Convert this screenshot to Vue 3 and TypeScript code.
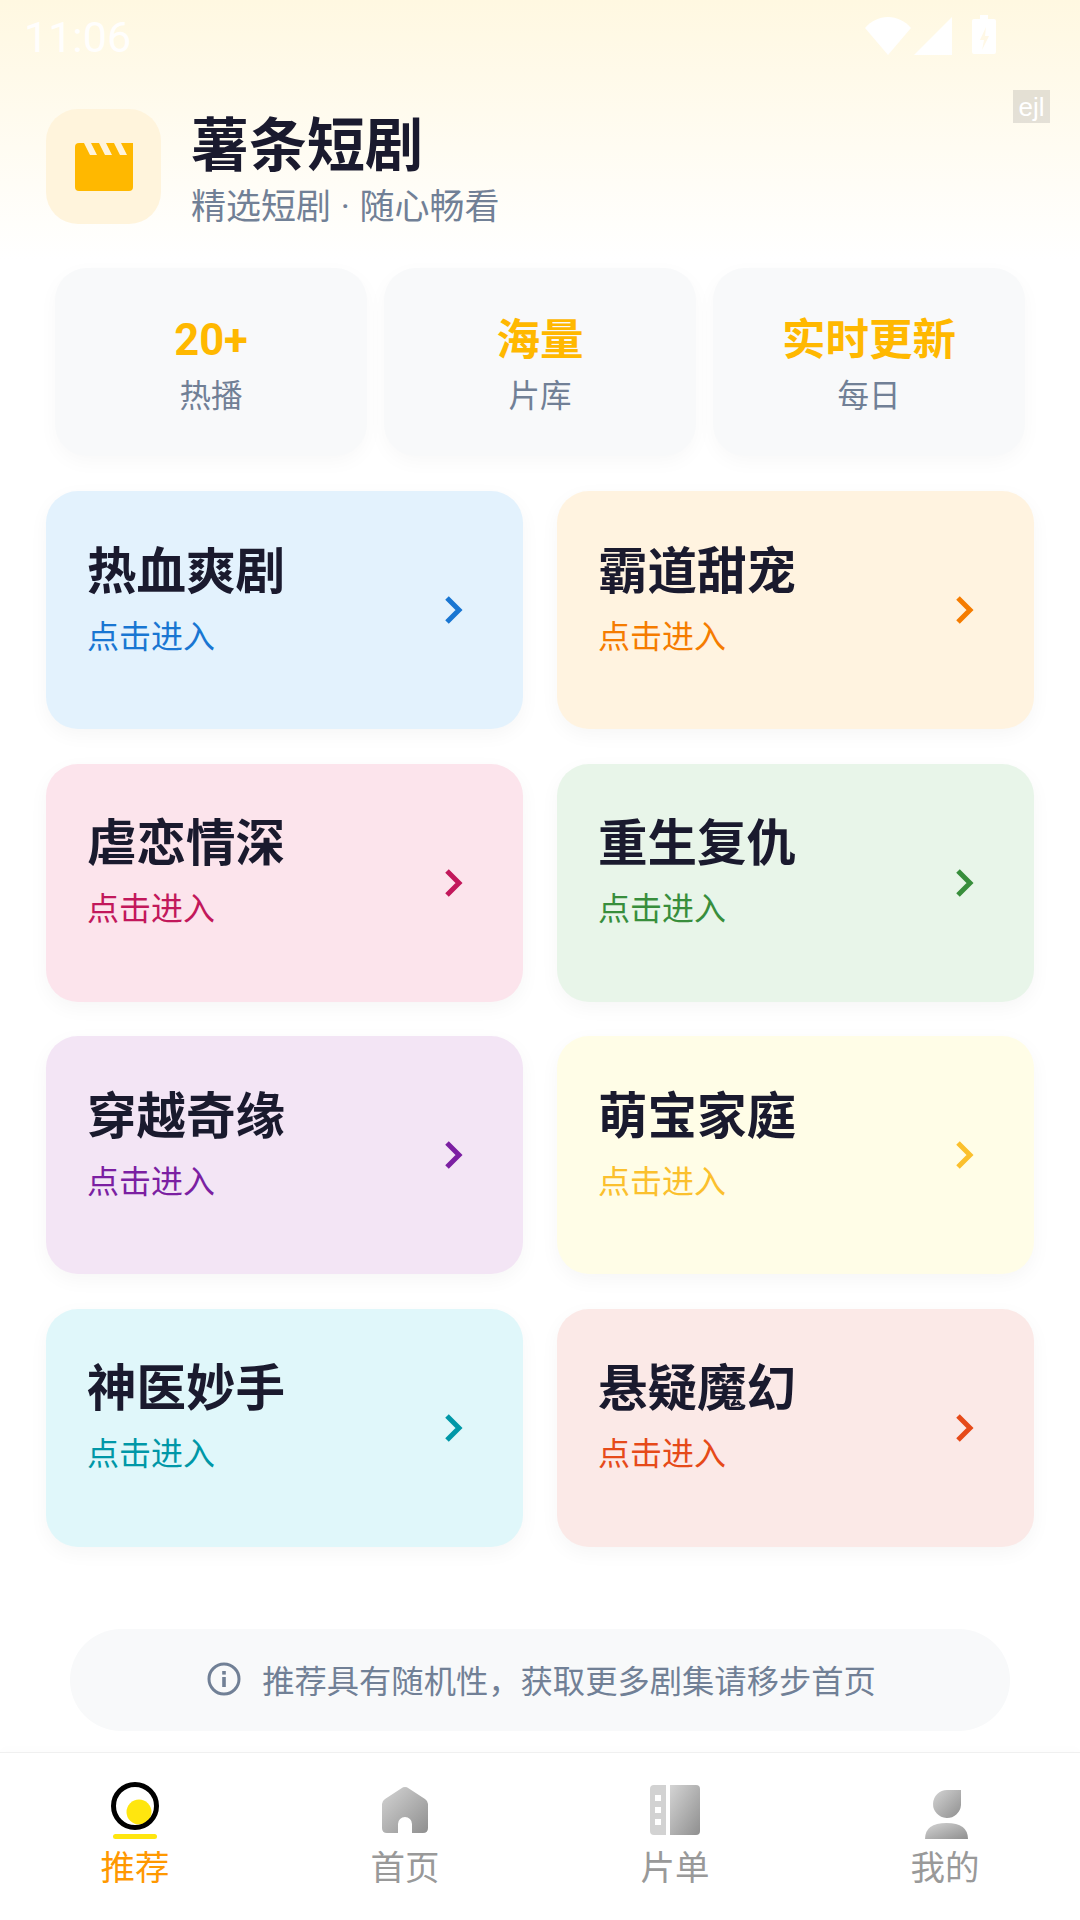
<template>
  <div class="page">
    <div class="status-bar">
      <span class="time">11:06</span>
      <div class="status-icons">
        <svg width="46" height="38" viewBox="0 0 46 38"><path d="M0 11C6 4 14 0 23 0s17 4 23 11L23 38z" fill="#fff" /></svg>
        <svg width="38" height="38" viewBox="0 0 38 38"><path d="M38 0v38H0z" fill="#fff" /></svg>
        <svg class="battery" width="24" height="39" viewBox="0 0 24 39">
          <path d="M8 0h8v4h6a2 2 0 0 1 2 2v31a2 2 0 0 1-2 2H2a2 2 0 0 1-2-2V6a2 2 0 0 1 2-2h6z" fill="#fff" />
          <path d="M14 12l-6 13h4l-2 10 7-14h-4z" fill="#fff8e6" />
        </svg>
      </div>
    </div>
    <span class="tag-ejl">ejl</span>

    <header class="header">
      <div class="logo">
        <svg width="58" height="48" viewBox="0 0 58 48">
          <path d="M4 0h54v44a4 4 0 0 1-4 4H4a4 4 0 0 1-4-4V4a4 4 0 0 1 4-4z" fill="#ffb800" />
          <path d="M9 0h7l6 12h-7zM24 0h7l6 12h-7zM39 0h7l6 12h-7z" fill="#fff4dc" />
        </svg>
      </div>
      <div class="brand">
        <h1 class="brand-title">薯条短剧</h1>
        <p class="brand-sub">精选短剧 · 随心畅看</p>
      </div>
    </header>

    <section class="stats">
      <div class="stat" v-for="s in stats" :key="s.label">
        <span class="stat-value">{{ s.value }}</span>
        <span class="stat-label">{{ s.label }}</span>
      </div>
    </section>

    <section class="grid">
      <div
        class="card"
        v-for="c in cards"
        :key="c.title"
        :style="{ backgroundColor: c.bg, color: c.accent }"
      >
        <div class="card-text">
          <span class="card-title">{{ c.title }}</span>
          <span class="card-sub">点击进入</span>
        </div>
        <svg class="chevron" width="20" height="30" viewBox="0 0 20 30">
          <path d="M3 3l12 12L3 27" fill="none" stroke="currentColor" stroke-width="5" />
        </svg>
      </div>
    </section>

    <div class="hint">
      <svg width="34" height="34" viewBox="0 0 34 34">
        <circle cx="17" cy="17" r="15" fill="none" stroke="#718096" stroke-width="3" />
        <rect x="15.2" y="15" width="3.6" height="10" fill="#718096" />
        <rect x="15.2" y="9" width="3.6" height="3.6" fill="#718096" />
      </svg>
      <span class="hint-text">推荐具有随机性，获取更多剧集请移步首页</span>
    </div>

    <nav class="tabs">
      <div class="tab active">
        <svg width="50" height="56" viewBox="0 0 50 56">
          <circle cx="29" cy="28" r="12.5" fill="#ffe60f" />
          <circle cx="25" cy="22" r="21.500" fill="none" stroke="#000" stroke-width="5" />
          <rect x="3" y="50" width="44" height="5" rx="2.5" fill="#ffe60f" />
        </svg>
        <span>推荐</span>
      </div>
      <div class="tab">
        <svg width="50" height="56" viewBox="0 0 50 56">
          <defs>
            <linearGradient id="navGray" x1="0" y1="0" x2="1" y2="1">
              <stop offset="0" stop-color="#d4d4d4" />
              <stop offset="1" stop-color="#8f8f8f" />
            </linearGradient>
          </defs>
          <path d="M25 3q2 0 3.500 1.200L45 15q3 2 3 5v24q0 5-5 5H32V40a7 7 0 0 0-14 0v9H7q-5 0-5-5V20q0-3 3-5L21.500 4.200Q23 3 25 3z" fill="url(#navGray)" />
        </svg>
        <span>首页</span>
      </div>
      <div class="tab">
        <svg width="50" height="56" viewBox="0 0 50 56">
          <path fill-rule="evenodd" d="M4 1h12v50H4q-4 0-4-4V5q0-4 4-4zM5 11v6h6v-6zM5 23v6h6v-6zM5 35v6h6v-6z" fill="#d2d2d2" />
          <path d="M20 1h26q4 0 4 4v42q0 4-4 4H20z" fill="url(#navGray)" />
        </svg>
        <span>片单</span>
      </div>
      <div class="tab">
        <svg width="50" height="56" viewBox="0 0 50 56">
          <path d="M41 6v15a14 14 0 1 1-14-15z" fill="url(#navGray)" />
          <path d="M5 55q0-16 21.500-16t21.500 16z" fill="url(#navGray)" />
        </svg>
        <span>我的</span>
      </div>
    </nav>
  </div>
</template>

<script setup lang="ts">
interface Stat {
  value: string
  label: string
}

interface Card {
  title: string
  bg: string
  accent: string
}

const stats: Stat[] = [
  { value: '20+', label: '热播' },
  { value: '海量', label: '片库' },
  { value: '实时更新', label: '每日' }
]

const cards: Card[] = [
  { title: '热血爽剧', bg: '#e3f2fd', accent: '#1976d2' },
  { title: '霸道甜宠', bg: '#fff3e0', accent: '#f57c00' },
  { title: '虐恋情深', bg: '#fce4ec', accent: '#c2185b' },
  { title: '重生复仇', bg: '#e8f5e9', accent: '#388e3c' },
  { title: '穿越奇缘', bg: '#f3e5f5', accent: '#7b1fa2' },
  { title: '萌宝家庭', bg: '#fffde7', accent: '#fbc02d' },
  { title: '神医妙手', bg: '#e0f7fa', accent: '#0097a7' },
  { title: '悬疑魔幻', bg: '#fbe9e7', accent: '#e64a19' }
]
</script>

<style>
html,
body {
  margin: 0;
  background: #fff;
}
</style>

<style scoped>
.page {
  position: relative;
  width: 1080px;
  height: 1920px;
  display: flex;
  flex-direction: column;
  overflow: hidden;
  font-family: Roboto, "Noto Sans CJK SC", sans-serif;
  background: linear-gradient(to bottom, #fff8e1 0, #ffffff 260px);
}

.status-bar {
  height: 72px;
  flex-shrink: 0;
  display: flex;
  align-items: flex-start;
  justify-content: space-between;
  padding: 15px 84px 0 24px;
  box-sizing: border-box;
}

.time {
  font-size: 43px;
  line-height: 44px;
  color: rgba(255, 255, 255, 0.95);
}

.status-icons {
  display: flex;
  align-items: flex-start;
  gap: 3px;
  padding-top: 2px;
}

.battery {
  margin-left: 17px;
  margin-top: -2px;
}

.tag-ejl {
  position: absolute;
  top: 90px;
  right: 30px;
  width: 37px;
  height: 33px;
  line-height: 35px;
  text-align: center;
  font-family: "Liberation Sans", sans-serif;
  font-size: 26px;
  color: #fff;
  background: rgba(120, 120, 120, 0.2);
}

.header {
  display: flex;
  align-items: flex-start;
  gap: 30px;
  padding: 37px 46px 0;
}

.logo {
  width: 115px;
  height: 115px;
  border-radius: 32px;
  background: #fff4dc;
  display: flex;
  align-items: center;
  justify-content: center;
}

.brand {
  margin-top: 2px;
}

.brand-title {
  margin: 0;
  font-size: 58px;
  line-height: 70px;
  font-weight: 700;
  color: #1a1a2e;
}

.brand-sub {
  margin: 4px 0 0;
  font-size: 35px;
  line-height: 46px;
  word-spacing: 1px;
  color: #718096;
}

.stats {
  display: grid;
  grid-template-columns: repeat(3, 1fr);
  gap: 17px;
  margin-top: 37px;
  padding: 0 55px;
}

.stat {
  height: 188px;
  box-sizing: border-box;
  padding-top: 6.500px;
  border-radius: 32px;
  background: #f8f9fa;
  box-shadow: 0 6px 20px rgba(0, 0, 0, 0.03);
  display: flex;
  flex-direction: column;
  align-items: center;
  justify-content: center;
  gap: 6.500px;
}

.stat-value {
  font-size: 43.500px;
  line-height: 56px;
  font-weight: 700;
  color: #ffb800;
}

.stat-label {
  font-size: 31.500px;
  line-height: 42px;
  color: #718096;
}

.grid {
  display: grid;
  grid-template-columns: repeat(2, 1fr);
  gap: 34.500px 34px;
  margin-top: 35px;
  padding: 0 46px;
}

.card {
  height: 238px;
  border-radius: 32px;
  padding: 0 59px 0 41px;
  box-shadow: 0 6px 20px rgba(0, 0, 0, 0.04);
  display: flex;
  align-items: center;
  justify-content: space-between;
}

.card-text {
  display: flex;
  flex-direction: column;
  margin-bottom: 24px;
}

.card-title {
  font-size: 49.500px;
  line-height: 66px;
  font-weight: 700;
  color: #1a1a2e;
}

.card-sub {
  margin-top: 11px;
  font-size: 32px;
  line-height: 42px;
}

.hint {
  margin: auto 70px 0;
  height: 102px;
  box-sizing: border-box;
  padding-left: 3px;
  border-radius: 51px;
  background: #f8f9fa;
  display: flex;
  align-items: center;
  justify-content: center;
  gap: 21px;
  font-size: 32.300px;
  color: #718096;
  position: relative;
  top: -21px;
}

.hint svg {
  margin-top: -2px;
}

.hint-text {
  margin-top: -3px;
}

.tabs {
  height: 168px;
  flex-shrink: 0;
  display: flex;
  background: #fff;
  border-top: 1px solid #f0f0f0;
  box-shadow: 0 -4px 10px rgba(0, 0, 0, 0.01);
  box-sizing: border-box;
}

.tab {
  flex: 1;
  display: flex;
  flex-direction: column;
  align-items: center;
  padding-top: 31px;
  font-size: 34.500px;
  line-height: 44px;
  color: #999;
}

.tab svg {
  margin-bottom: 6px;
  overflow: visible;
}

.tab.active {
  color: #ff9800;
}
</style>
